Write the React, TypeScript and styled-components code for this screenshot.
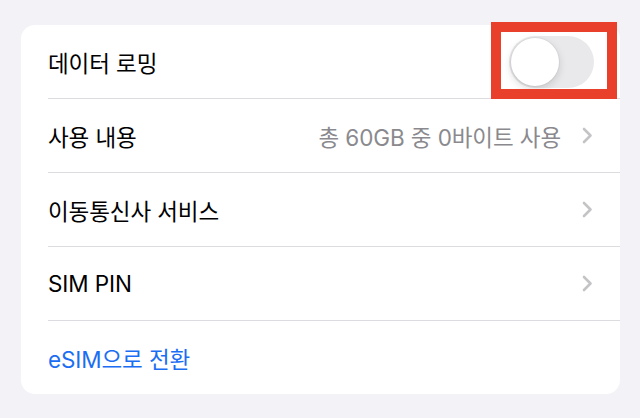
import React from 'react';
import styled, { createGlobalStyle } from 'styled-components';

const GlobalStyle = createGlobalStyle`
  html, body {
    margin: 0;
    padding: 0;
    background: #f2f2f7;
  }
  body {
    font-family: Inter, "Noto Sans CJK KR", "Noto Sans", sans-serif;
    -webkit-font-smoothing: antialiased;
  }
`;

type RowItem = {
  label: string;
  value?: string;
  chevron?: boolean;
  toggle?: boolean;
  link?: boolean;
};

const rows: RowItem[] = [
  { label: '데이터 로밍', toggle: true },
  { label: '사용 내용', value: '총 60GB 중 0바이트 사용', chevron: true },
  { label: '이동통신사 서비스', chevron: true },
  { label: 'SIM PIN', chevron: true },
  { label: 'eSIM으로 전환', link: true },
];

const Chevron = () => (
  <svg width="11" height="17" viewBox="0 0 11 17" fill="none">
    <path
      d="M2 2 L8.5 8.5 L2 15"
      stroke="#c4c4c7"
      strokeWidth="2.6"
      strokeLinecap="round"
      strokeLinejoin="round"
    />
  </svg>
);

const App: React.FC = () => {
  return (
    <Page>
      <GlobalStyle />
      <Card>
        {rows.map((r, i) => (
          <React.Fragment key={r.label}>
            {i > 0 && <Separator />}
            <Row>
              <Label $link={r.link}>{r.label}</Label>
              <Trailing>
                {r.value && <Value>{r.value}</Value>}
                {r.chevron && <Chevron />}
                {r.toggle && (
                  <ToggleWrap>
                    <Switch>
                      <Knob />
                    </Switch>
                    <Highlight />
                  </ToggleWrap>
                )}
              </Trailing>
            </Row>
          </React.Fragment>
        ))}
      </Card>
    </Page>
  );
};

export default App;

// --- styled-components ---
const Page = styled.div`
  width: 640px;
  height: 418px;
  box-sizing: border-box;
  padding: 25px 20px 0 21px;
  background: #f2f2f7;
  overflow: hidden;
`;

const Card = styled.div`
  width: 599px;
  background: #ffffff;
  border-radius: 14px;
  display: flex;
  flex-direction: column;
`;

const Row = styled.div`
  height: 73px;
  display: flex;
  align-items: center;
  justify-content: space-between;
  padding: 0 27px 0 27px;
`;

const Separator = styled.div`
  height: 1px;
  margin-left: 27px;
  background: #dcdce0;
`;

const Label = styled.span<{ $link?: boolean }>`
  font-size: 22.5px;
  font-weight: 400;
  letter-spacing: -0.1px;
  color: ${(p) => (p.$link ? '#1b6ef3' : '#000000')};
`;

const Trailing = styled.div`
  display: flex;
  align-items: center;
  gap: 21px;
`;

const Value = styled.span`
  font-size: 22.5px;
  font-weight: 400;
  letter-spacing: -0.1px;
  color: #8a8a8e;
`;

const ToggleWrap = styled.div`
  position: relative;
  margin-right: -1px;
`;

const Switch = styled.div`
  position: relative;
  width: 85px;
  height: 52px;
  border-radius: 26px;
  background: #e9e9eb;
`;

const Knob = styled.div`
  position: absolute;
  left: 2px;
  top: 2px;
  width: 48px;
  height: 48px;
  border-radius: 50%;
  background: #ffffff;
  box-shadow: 0 3px 8px rgba(0, 0, 0, 0.15), 0 0 0 1px rgba(0, 0, 0, 0.04);
`;

const Highlight = styled.div`
  position: absolute;
  left: -18px;
  top: -14px;
  width: 126px;
  height: 77px;
  box-sizing: border-box;
  border: 10px solid #e8402a;
  pointer-events: none;
`;
